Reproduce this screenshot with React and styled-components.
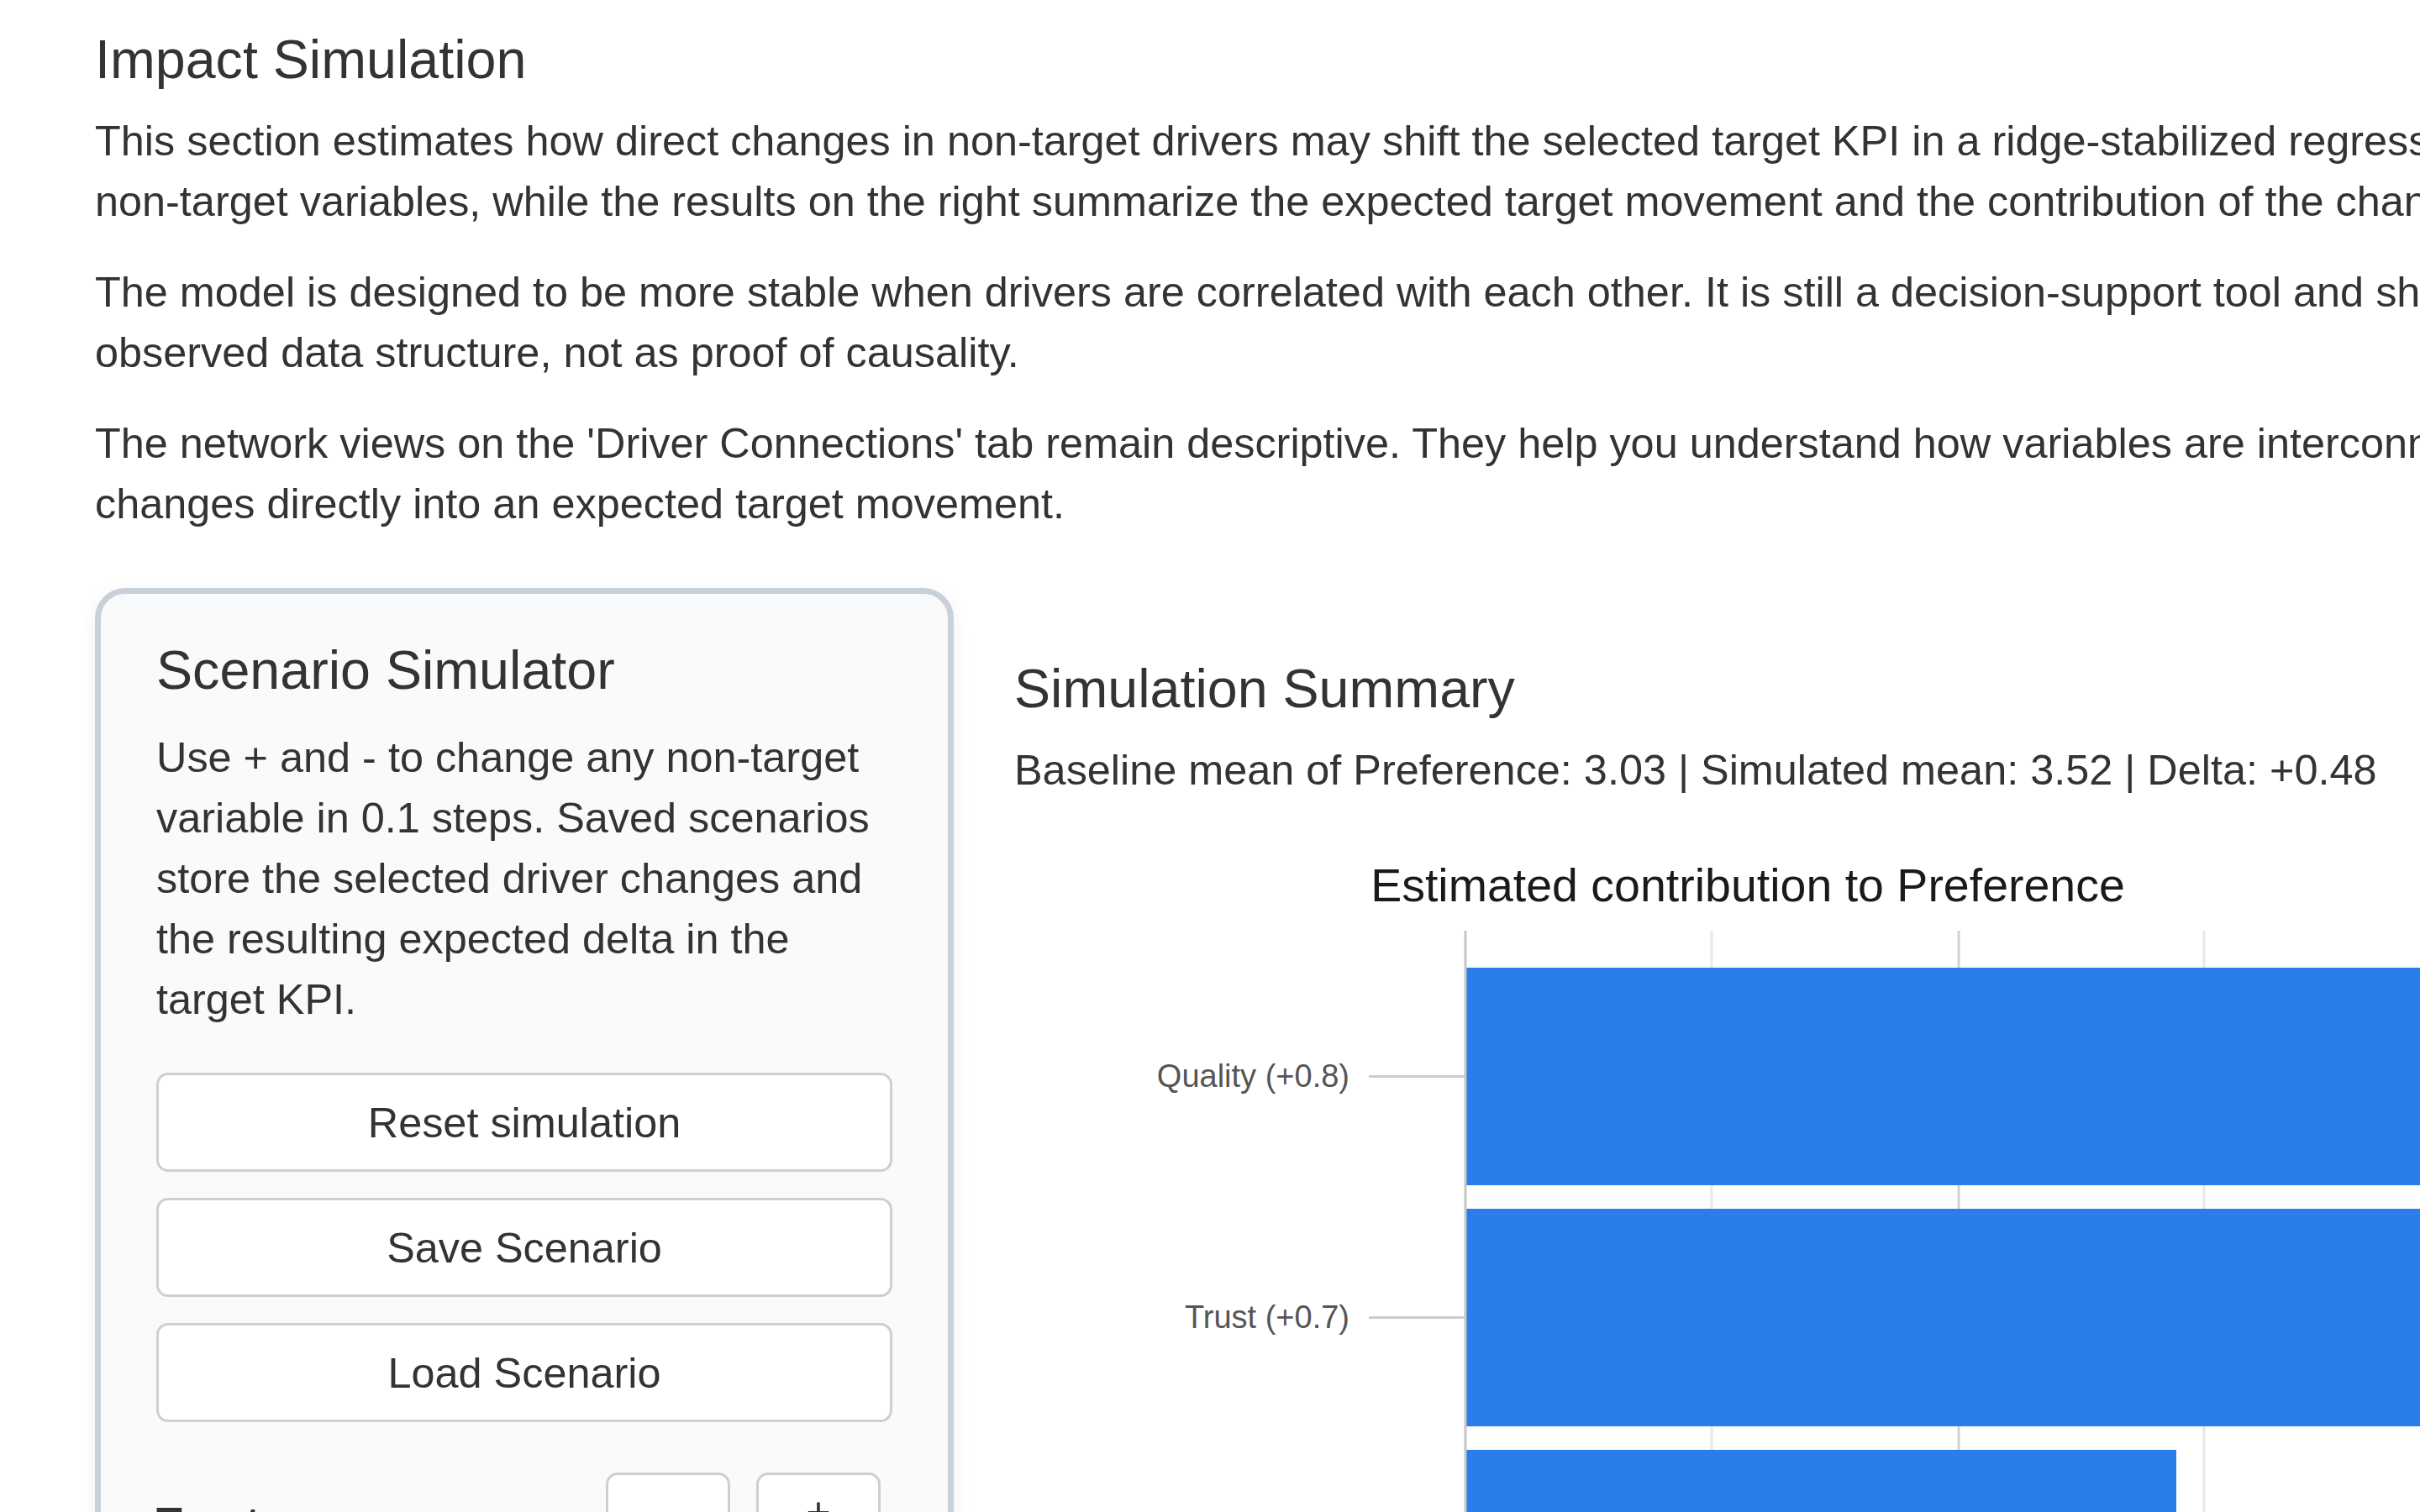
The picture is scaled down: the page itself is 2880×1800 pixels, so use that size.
import React from 'react';
import styled, { createGlobalStyle } from 'styled-components';

const drivers = ['Trust', 'Quality', 'Price', 'Service'];

const contributions = [
  { label: 'Quality (+0.8)', length: 1300 },
  { label: 'Trust (+0.7)', length: 1250 },
  { label: 'Service (+0.4)', length: 845 },
];

const BAR_HEIGHT = 259;
const BAR_STEP = 287;
const AXIS_X = 537;

const ContributionChart = () => (
  <ChartSvg width="1740" height="1100" viewBox="0 0 1740 1100">
    <text x="873" y="113" textAnchor="middle" fontSize="55.5" fill="#1a1a1a">
      Estimated contribution to Preference
    </text>
    {[830, 1416].map((x) => (
      <line key={x} x1={x} x2={x} y1="148" y2="1100" stroke="#e8e8e8" strokeWidth="3" />
    ))}
    {[1124, 1710].map((x) => (
      <line key={x} x1={x} x2={x} y1="148" y2="1100" stroke="#d2d2d2" strokeWidth="3" />
    ))}
    {contributions.map((item, i) => {
      const top = 192 + i * BAR_STEP;
      const mid = top + BAR_HEIGHT / 2;
      return (
        <g key={item.label}>
          <rect x={AXIS_X + 1} y={top} width={item.length} height={BAR_HEIGHT} fill="#2b7de9" />
          <line x1="422" x2={AXIS_X} y1={mid} y2={mid} stroke="#cccccc" strokeWidth="3" />
          <text x="399" y={mid + 12} textAnchor="end" fontSize="38" fill="#555">
            {item.label}
          </text>
        </g>
      );
    })}
    <line x1={AXIS_X} x2={AXIS_X} y1="148" y2="1100" stroke="#c6c6c6" strokeWidth="3" />
  </ChartSvg>
);

const App = () => {
  return (
    <>
      <GlobalStyle />
      <Page>
        <Heading>Impact Simulation</Heading>
        <Lead>
          This section estimates how direct changes in non-target drivers may shift the selected target KPI in a ridge-stabilized regression model. The controls on the left adjust the
          <br />
          non-target variables, while the results on the right summarize the expected target movement and the contribution of the changed drivers.
        </Lead>
        <Lead>
          The model is designed to be more stable when drivers are correlated with each other. It is still a decision-support tool and should be read as an estimate based on the
          <br />
          observed data structure, not as proof of causality.
        </Lead>
        <Lead>
          The network views on the 'Driver Connections' tab remain descriptive. They help you understand how variables are interconnected, while this simulation translates
          <br />
          changes directly into an expected target movement.
        </Lead>

        <Workspace>
          <SimulatorPanel>
            <PanelTitle>Scenario Simulator</PanelTitle>
            <PanelText>
              Use + and - to change any non-target variable in 0.1 steps. Saved scenarios store the selected driver changes and the resulting expected delta in the target KPI.
            </PanelText>
            <ButtonStack>
              <ActionButton type="button">Reset simulation</ActionButton>
              <ActionButton type="button">Save Scenario</ActionButton>
              <ActionButton type="button">Load Scenario</ActionButton>
            </ButtonStack>
            {drivers.map((name) => (
              <DriverRow key={name}>
                <DriverName>{name}</DriverName>
                <StepButton type="button">-</StepButton>
                <StepButton type="button">+</StepButton>
              </DriverRow>
            ))}
          </SimulatorPanel>

          <SummaryColumn>
            <Heading>Simulation Summary</Heading>
            <SummaryLine>
              Baseline mean of Preference: 3.03 | Simulated mean: 3.52 | Delta: +0.48
            </SummaryLine>
            <ContributionChart />
          </SummaryColumn>
        </Workspace>
      </Page>
    </>
  );
};

export default App;

const GlobalStyle = createGlobalStyle`
  * {
    box-sizing: border-box;
  }

  html, body {
    margin: 0;
    padding: 0;
    overflow: hidden;
    background: #ffffff;
  }

  body {
    font-family: "Liberation Sans", Arial, Helvetica, sans-serif;
    color: #333;
  }
`;

const Page = styled.main`
  padding: 36px 0 0 113px;
`;

const Heading = styled.h4`
  margin: 0 0 25px;
  font-size: 64.6px;
  line-height: 71px;
  font-weight: 400;
  color: #333;
`;

const Lead = styled.p`
  margin: 0 0 36px;
  font-size: 50.4px;
  line-height: 72px;
  white-space: nowrap;
`;

const Workspace = styled.div`
  display: grid;
  grid-template-columns: 1022px 1fr;
  column-gap: 72px;
  align-items: start;
  padding-top: 28px;
`;

const SimulatorPanel = styled.section`
  background: #f9fafb;
  border: 7px solid #c8d0d9;
  border-radius: 36px;
  padding: 56px 66px 60px;
  box-shadow: 0 6px 24px rgba(15, 23, 42, 0.06);
`;

const PanelTitle = styled.h4`
  margin: 0 0 32px;
  font-size: 64.6px;
  line-height: 71px;
  font-weight: 400;
  color: #333;
`;

const PanelText = styled.p`
  margin: 0 0 51px;
  font-size: 50.4px;
  line-height: 72px;
`;

const ButtonStack = styled.div`
  display: flex;
  flex-direction: column;
  gap: 31px;
`;

const ActionButton = styled.button`
  width: 100%;
  height: 118px;
  background: #fff;
  border: 3px solid #cfcfcf;
  border-radius: 14px;
  font-family: inherit;
  font-size: 50.4px;
  color: #333;
  cursor: pointer;

  &:hover {
    background: #e6e6e6;
  }
`;

const DriverRow = styled.div`
  display: grid;
  grid-template-columns: 1fr 148px 148px;
  column-gap: 31px;
  align-items: start;
  margin-top: 60px;
  padding-right: 14px;
`;

const DriverName = styled.div`
  padding-top: 24px;
  font-size: 50.4px;
  line-height: 72px;
  font-weight: 700;
  color: #333;
`;

const StepButton = styled.button`
  height: 94px;
  background: #fff;
  border: 3px solid #cfcfcf;
  border-radius: 14px;
  font-family: inherit;
  font-size: 50.4px;
  line-height: 72px;
  color: #333;
  cursor: pointer;
`;

const SummaryColumn = styled.section`
  padding-top: 85px;
`;

const SummaryLine = styled.p`
  margin: 0 0 7px;
  font-size: 50.4px;
  line-height: 72px;
  white-space: nowrap;
`;

const ChartSvg = styled.svg`
  display: block;
  overflow: visible;
  font-family: "Liberation Sans", Arial, Helvetica, sans-serif;
`;
